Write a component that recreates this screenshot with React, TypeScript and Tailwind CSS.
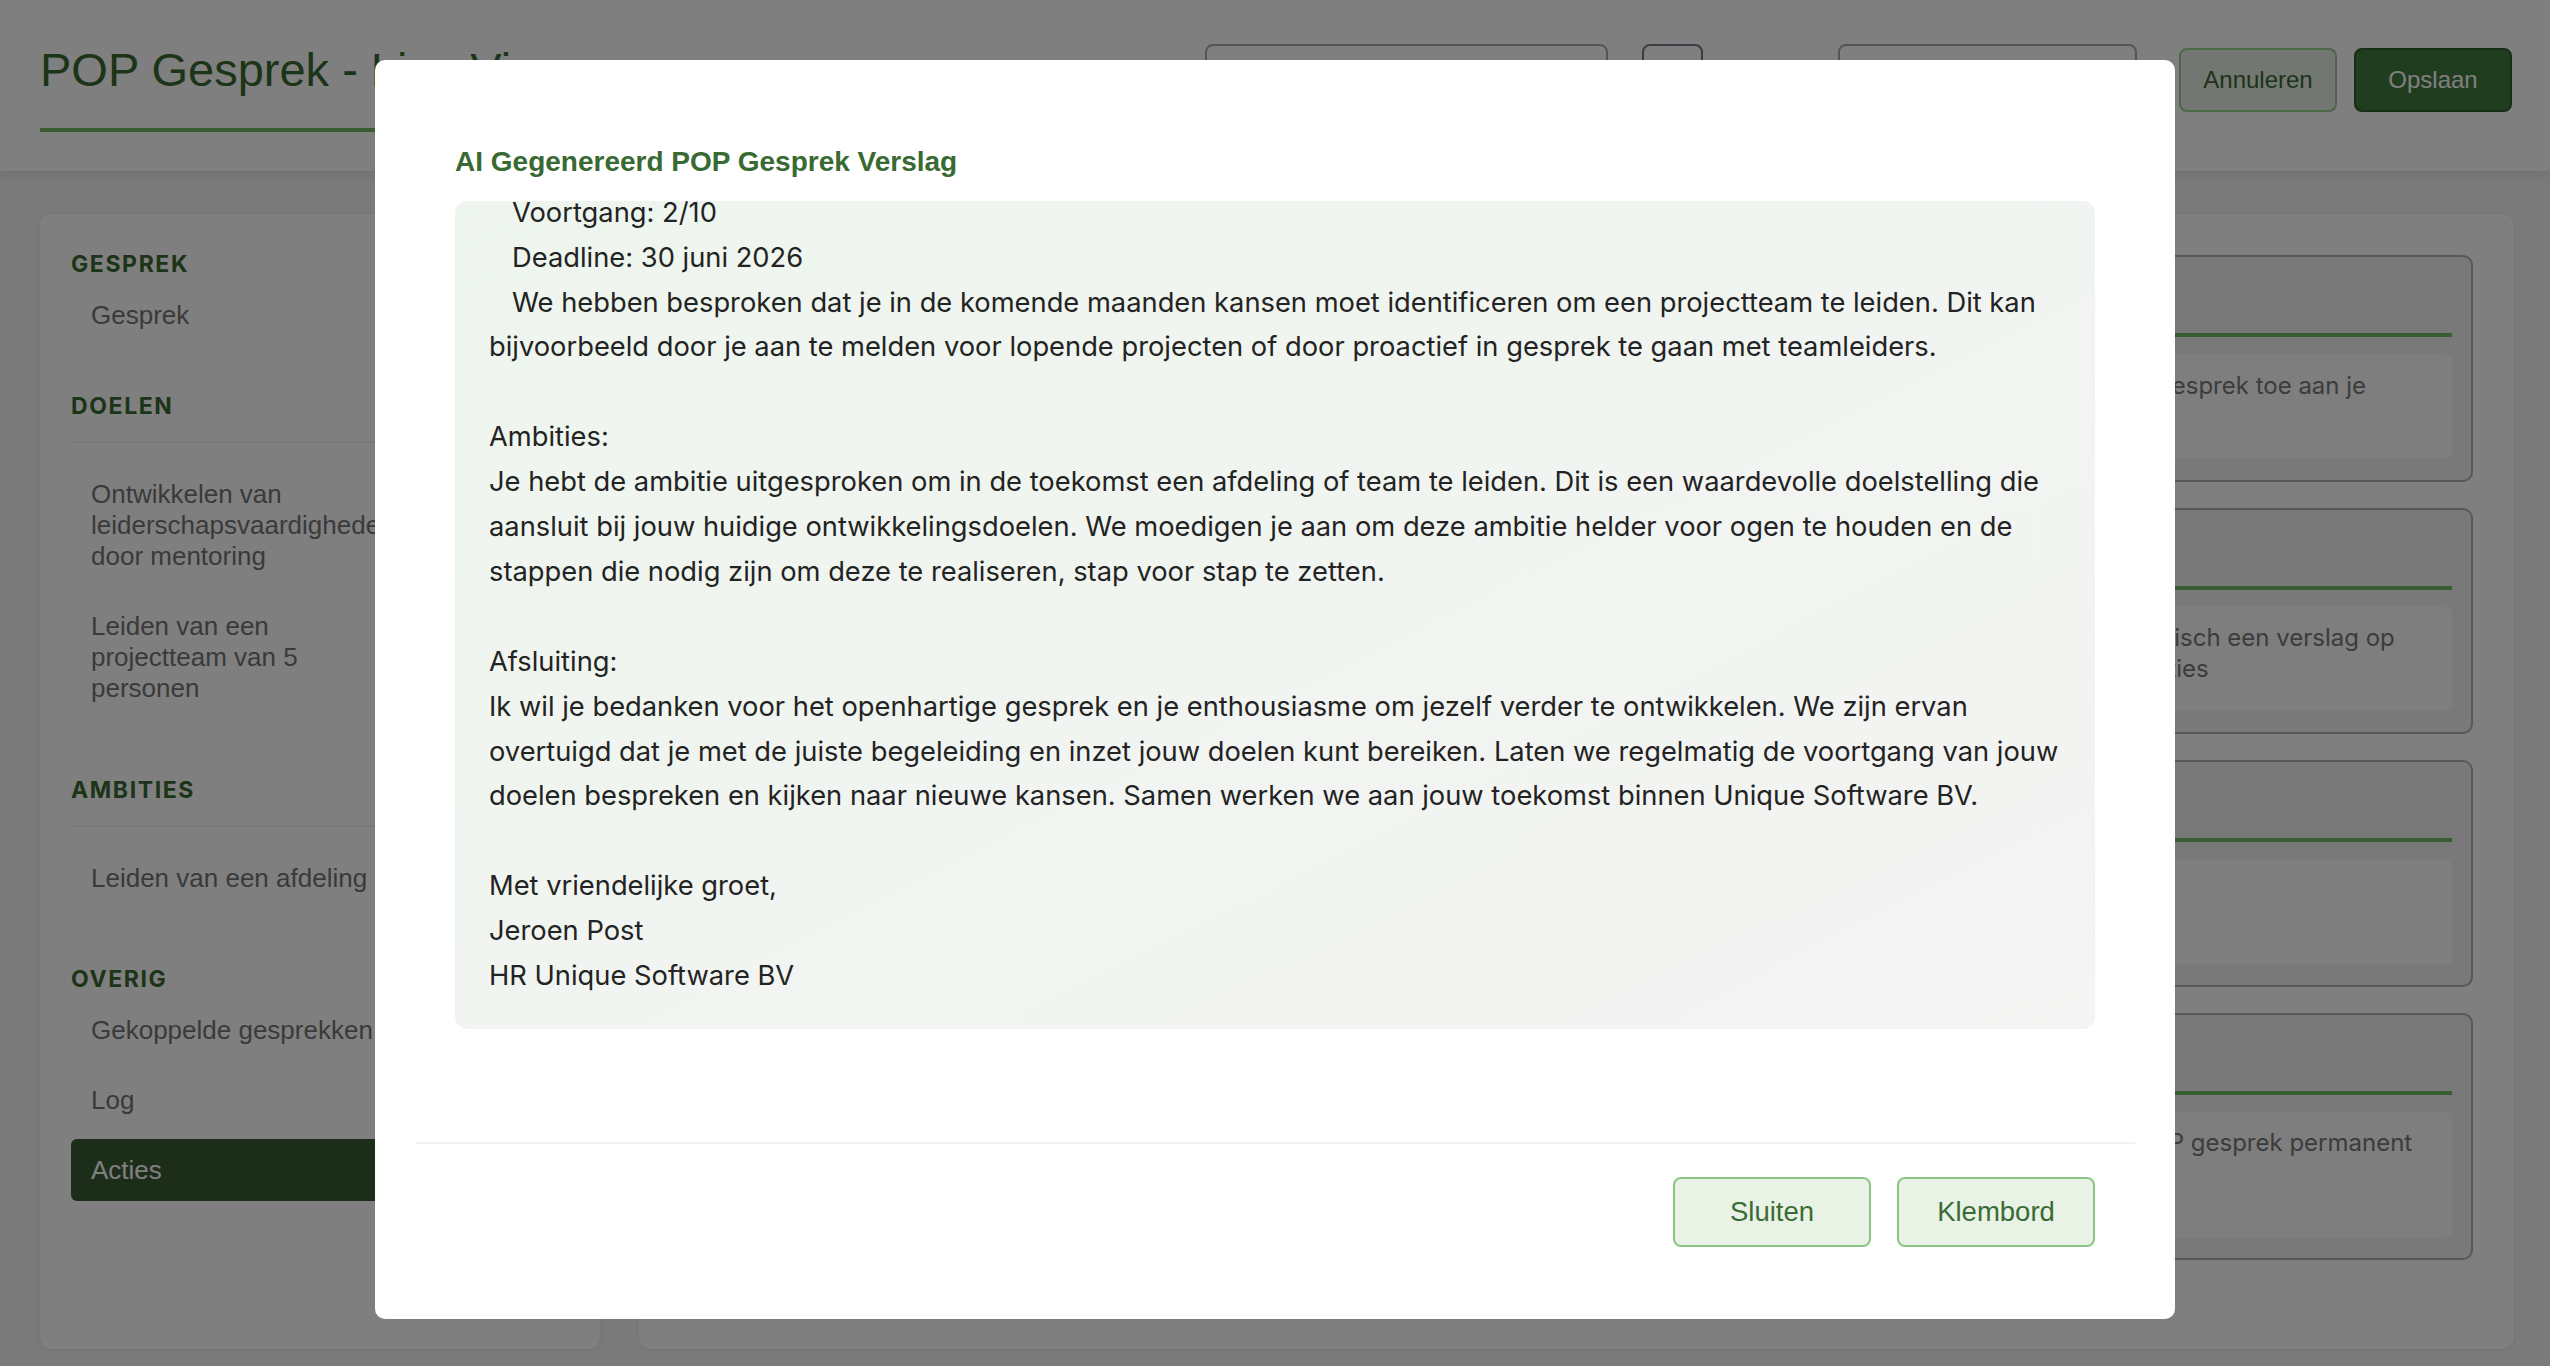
import { ReactNode } from "react";

type NavItem = { label: string; progress?: string; active?: boolean };
type NavSection = {
  title: string;
  spacing: string;
  divider?: boolean;
  items: NavItem[];
};

const navSections: NavSection[] = [
  { title: "Gesprek", spacing: "", items: [{ label: "Gesprek" }] },
  {
    title: "Doelen",
    spacing: "mt-[46px]",
    divider: true,
    items: [
      {
        label: "Ontwikkelen van leiderschapsvaardigheden door mentoring",
        progress: "4/10",
      },
      { label: "Leiden van een projectteam van 5 personen", progress: "2/10" },
    ],
  },
  {
    title: "Ambities",
    spacing: "mt-[57px]",
    divider: true,
    items: [{ label: "Leiden van een afdeling of team" }],
  },
  {
    title: "Overig",
    spacing: "mt-[56px]",
    items: [
      { label: "Gekoppelde gesprekken" },
      { label: "Log" },
      { label: "Acties", active: true },
    ],
  },
];

type Actie = { title: string; text: string; note?: string };

const acties: Actie[] = [
  {
    title: "Gesprek koppelen",
    text: "Voeg eerder gevoerde beoordelings- en functioneringsgesprekken die betrekking hebben op deze medewerker als gekoppeld gesprek toe aan je persoonlijke ontwikkelplan.",
  },
  {
    title: "Verslag genereren",
    text: "Genereer met behulp van kunstmatige intelligentie (AI) op een zeer eenvoudige, snelle en betrouwbare manier direct en automatisch een verslag op basis van alle informatie uit dit gesprek, zoals de eerder besproken doelen, de uitgesproken ambities en alle concrete vervolgacties",
  },
  {
    title: "Exporteren",
    text: "Download een PDF-versie van dit POP gesprek om te printen of te archiveren.",
  },
  {
    title: "Gesprek verwijderen",
    text: "Wanneer je deze actie bevestigt, worden alle gegevens, notities en bijbehorende verslagen direct verwijderd en verdwijnt dit POP gesprek permanent uit het systeem.",
    note: "Deze actie kan niet ongedaan worden gemaakt.",
  },
];

const verslag = `Beste Lisa,

Bedankt voor het open en waardevolle POP gesprek dat we samen hebben gevoerd. In dit verslag vatten we de belangrijkste punten van ons gesprek samen, zodat je een helder overzicht hebt van je doelen en ambities.

Doelen:
1. Ontwikkelen van leiderschapsvaardigheden door mentoring
   Voortgang: 4/10
   Deadline: 31 december 2025
   Je hebt aangegeven dat je graag wilt groeien in je rol als leidinggevende. We hebben afgesproken dat je maandelijks een mentorgesprek voert met een ervaren collega.
2. Leiden van een projectteam van 5 personen
   Voortgang: 2/10
   Deadline: 30 juni 2026
   We hebben besproken dat je in de komende maanden kansen moet identificeren om een projectteam te leiden. Dit kan bijvoorbeeld door je aan te melden voor lopende projecten of door proactief in gesprek te gaan met teamleiders.

Ambities:
Je hebt de ambitie uitgesproken om in de toekomst een afdeling of team te leiden. Dit is een waardevolle doelstelling die aansluit bij jouw huidige ontwikkelingsdoelen. We moedigen je aan om deze ambitie helder voor ogen te houden en de stappen die nodig zijn om deze te realiseren, stap voor stap te zetten.

Afsluiting:
Ik wil je bedanken voor het openhartige gesprek en je enthousiasme om jezelf verder te ontwikkelen. We zijn ervan overtuigd dat je met de juiste begeleiding en inzet jouw doelen kunt bereiken. Laten we regelmatig de voortgang van jouw doelen bespreken en kijken naar nieuwe kansen. Samen werken we aan jouw toekomst binnen Unique Software BV.

Met vriendelijke groet,
Jeroen Post
HR Unique Software BV`;

function Header() {
  return (
    <header className="flex h-[171px] items-start justify-between bg-white pl-[40px] pr-[38px] pt-[44px] shadow-[0_4px_10px_rgba(0,0,0,0.08)]">
      <div className="border-b-4 border-[#72b866] pb-[32px] pr-[40px]">
        <h1 className="font-['Liberation_Sans',Arial,sans-serif] text-[47px] leading-[52px] text-[#386a32]">
          POP Gesprek - Lisa Visser
        </h1>
      </div>
      <div className="flex h-[72px] items-center font-['Liberation_Sans',Arial,sans-serif] text-[24px]">
        <div className="flex h-[72px] w-[403px] items-center rounded-[8px] border-2 border-[#ababab] px-[18px] text-[#333]">
          Lisa Visser
        </div>
        <div className="ml-[34px] h-[72px] w-[61px] rounded-[8px] border-2 border-[#747e8a]" />
        <span className="ml-[34px] text-[#555]">Datum</span>
        <div className="ml-[30px] flex h-[72px] w-[299px] items-center rounded-[8px] border-2 border-[#ababab] px-[18px] text-[#333]">
          12-03-2025
        </div>
        <button className="ml-[42px] h-[64px] w-[158px] rounded-[8px] border-2 border-[#96d28c] bg-[#e4f1e2] text-[#3c6438]">
          Annuleren
        </button>
        <button className="ml-[17px] h-[64px] w-[158px] rounded-[8px] border-2 border-[#2f5a2b] bg-[#437a3e] text-white">
          Opslaan
        </button>
      </div>
    </header>
  );
}

function Sidebar() {
  return (
    <aside className="h-[1135px] w-[560px] shrink-0 rounded-xl bg-white px-[31px] pt-[36px] shadow-[0_1px_4px_rgba(0,0,0,0.06)]">
      {navSections.map((section) => (
        <section key={section.title} className={section.spacing}>
          <h2 className="font-['Inter',sans-serif] text-[23px] font-bold uppercase leading-[28px] tracking-[0.07em] text-[#386a32]">
            {section.title}
          </h2>
          {section.divider ? (
            <div className="mt-[21px] h-[2px] bg-[#f0f0f0]" />
          ) : null}
          <ul
            className={`flex flex-col gap-[8px] ${
              section.divider ? "pt-[20px]" : "mt-[6px]"
            }`}
          >
            {section.items.map((item) => (
              <li
                key={item.label}
                className={`flex items-start rounded-[6px] px-[20px] py-[15.5px] font-['Liberation_Sans',Arial,sans-serif] text-[26px] leading-[31px] ${
                  item.active ? "bg-[#385c32] text-white" : "text-[#757575]"
                }`}
              >
                {item.progress ? (
                  <>
                    <span className="w-[310px]">{item.label}</span>
                    <span className="ml-auto text-[20px] text-[#386a32]">
                      {item.progress}
                    </span>
                  </>
                ) : (
                  <span className="whitespace-nowrap">{item.label}</span>
                )}
              </li>
            ))}
          </ul>
        </section>
      ))}
    </aside>
  );
}

function ActieCard({ actie }: { actie: Actie }) {
  return (
    <div className="rounded-[10px] border-2 border-[#b0b0b0] bg-[#f3f3f3] px-[19px] pb-[21px] pt-[22px]">
      <h3 className="border-b-4 border-[#72b866] pb-[14px] font-['Inter',sans-serif] text-[26px] font-semibold leading-[40px] text-[#386a32]">
        {actie.title}
      </h3>
      <div className="mt-[17.5px] min-h-[104px] rounded-[6px] bg-[#fcfcfc] px-[20px] pb-[27px] pt-[15px] font-['Inter',sans-serif] text-[24px] leading-[31px] text-[#787878]">
        <p>{actie.text}</p>
        {actie.note ? (
          <p className="text-[16px] leading-[21px] text-[#b04a4a]">{actie.note}</p>
        ) : null}
      </div>
    </div>
  );
}

function ModalButton({ children }: { children: ReactNode }) {
  return (
    <button className="h-[70px] w-[198px] rounded-[8px] border-2 border-[#8cc484] bg-[#e8f3e6] font-['Liberation_Sans',Arial,sans-serif] text-[27.5px] text-[#3b6b35]">
      {children}
    </button>
  );
}

function VerslagDialog() {
  return (
    <div className="fixed inset-0 flex items-start justify-center bg-black/50 pt-[60px]">
      <div className="w-[1800px] rounded-[10px] bg-white px-[40px] pt-[85px]">
        <div className="px-[40px]">
          <h2 className="font-['Liberation_Sans',Arial,sans-serif] text-[28px] font-bold leading-[34px] text-[#386a32]">
            AI Gegenereerd POP Gesprek Verslag
          </h2>
          {/* scrolled to the end of the report */}
          <div className="mt-[22px] flex h-[828px] flex-col justify-end overflow-hidden rounded-[12px] bg-linear-to-br from-[#eef5ee] to-[#f4f4f3] pb-[30px] pl-[34px] pr-[21px]">
            <div className="whitespace-pre-wrap font-['Inter',sans-serif] text-[27.3px] leading-[44.9px] text-[#232323]">
              {verslag}
            </div>
          </div>
        </div>
        <div className="mt-[113px] flex justify-end gap-[26px] border-t-2 border-[#f2f2f2] px-[40px] pb-[72px] pt-[33px]">
          <ModalButton>Sluiten</ModalButton>
          <ModalButton>Klembord</ModalButton>
        </div>
      </div>
    </div>
  );
}

export default function App() {
  return (
    <div className="min-h-screen bg-[#f4f4f4]">
      <Header />
      <main className="flex gap-[39px] pl-[40px] pr-[36px] pt-[43px]">
        <Sidebar />
        <section className="flex h-[1135px] flex-1 flex-col gap-[26px] rounded-xl bg-white p-[41px] shadow-[0_1px_4px_rgba(0,0,0,0.06)]">
          {acties.map((actie) => (
            <ActieCard key={actie.title} actie={actie} />
          ))}
        </section>
      </main>
      <VerslagDialog />
    </div>
  );
}
